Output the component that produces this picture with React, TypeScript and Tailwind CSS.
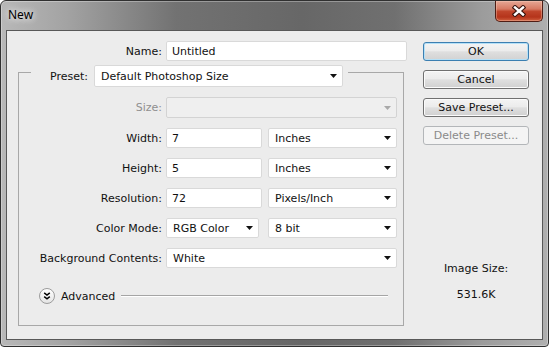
import React from "react";

function Tri({ color = "#111" }: { color?: string }) {
  return (
    <svg width="7" height="4" viewBox="0 0 7 4" className="shrink-0">
      <path d="M0 0H7L3.5 4Z" fill={color} />
    </svg>
  );
}

function Select({ w, text, disabled, h }: { w: string; text?: string; disabled?: boolean; h?: string }) {
  return (
    <div
      className={`flex items-center justify-between ${h ?? "h-[20px]"} ${w} rounded-[2px] border ${
        disabled ? "border-[#d3d3d3] bg-[#efefef]" : "border-[#d9d9d9] bg-white"
      } pl-[6px] pr-[5px]`}
    >
      <span>{text}</span>
      <Tri color={disabled ? "#a9a9a9" : "#111"} />
    </div>
  );
}

function Input({ w, text }: { w: string; text: string }) {
  return (
    <div className={`flex items-center h-[20px] ${w} rounded-[2px] border border-[#d9d9d9] bg-white pl-[5px]`}>
      <span>{text}</span>
    </div>
  );
}

function Row({
  label,
  children,
  disabled,
  extra,
}: {
  label: string;
  children: React.ReactNode;
  disabled?: boolean;
  extra?: string;
}) {
  return (
    <div className={`flex items-center ${extra ?? "h-[20px] mt-[10px]"}`}>
      <div className={`w-[143px] text-right ${disabled ? "text-[#8f8f8f]" : ""}`}>{label}</div>
      <div className="ml-[4px] flex items-center">{children}</div>
    </div>
  );
}

function Btn({
  children,
  primary,
  disabled,
  first,
}: {
  children: React.ReactNode;
  primary?: boolean;
  disabled?: boolean;
  first?: boolean;
}) {
  const cls = disabled
    ? "border-[#b3b6b9] bg-[#f4f4f4] text-[#8a8a8a]"
    : primary
    ? "border-[#3c7fb1] bg-[linear-gradient(#f4f4f4,#ececec_45%,#dfdfdf_52%,#d2d2d2)] shadow-[inset_0_0_0_1px_#b4e0f7]"
    : "border-[#707070] bg-[linear-gradient(#f4f4f4,#ececec_45%,#dfdfdf_52%,#d0d0d0)] shadow-[inset_0_0_0_1px_#fbfbfb]";
  return (
    <div
      className={`h-[19px] ${first ? "mt-[11px]" : "mt-[9px]"} flex items-center justify-center rounded-[3px] border ${cls}`}
    >
      {children}
    </div>
  );
}

function CloseBtn() {
  return (
    <div className="mr-[5px] w-[48px] h-[21px] rounded-b-[5px] border border-t-0 border-[#4f1d14] bg-[linear-gradient(#e6a795_0%,#d77a63_40%,#c0452b_52%,#b5341b_80%,#d0603f_100%)] shadow-[inset_0_0_0_1px_rgba(255,220,200,0.35)] flex items-center justify-center">
      <svg width="14" height="12" viewBox="0 0 14 12">
        <path d="M3 2.5L11 9.5M11 2.5L3 9.5" stroke="#3b1610" strokeWidth="4.6" strokeLinecap="square" />
        <path d="M3 2.5L11 9.5M11 2.5L3 9.5" stroke="#ffffff" strokeWidth="2.4" strokeLinecap="square" />
      </svg>
    </div>
  );
}

function AdvIcon() {
  return (
    <div className="w-[16px] h-[16px] rounded-full border border-[#9c9c9c] bg-[linear-gradient(#ffffff,#e4e4e4)] flex items-center justify-center">
      <svg width="8" height="8" viewBox="0 0 8 8">
        <path d="M1.2 0.8L4 3L6.8 0.8M1.2 4.6L4 6.8L6.8 4.6" stroke="#000" strokeWidth="1.5" fill="none" />
      </svg>
    </div>
  );
}

export default function App() {
  return (
    <div className="w-[549px] h-[347px] font-['DejaVu_Sans',sans-serif] text-[11px] leading-none text-[#111]">
      <div className="w-full h-full flex flex-col rounded-t-[6px] rounded-b-[4px] border border-[#303030] bg-[linear-gradient(90deg,#b8b8b8_0%,#a3a3a3_12%,#727272_32%,#676767_55%,#707070_72%,#9c9c9c_88%,#afafaf_100%)] shadow-[inset_0_0_0_1px_rgba(255,255,255,0.3)] overflow-hidden">
        <div className="h-[29px] shrink-0 flex items-start justify-between">
          <div className="pl-[7px] pt-[8px] font-['Noto_Sans',sans-serif] text-[12px] leading-[12px] text-black [text-shadow:0_0_6px_rgba(255,255,255,0.9),0_0_10px_rgba(255,255,255,0.6)]">
            New
          </div>
          <CloseBtn />
        </div>
        <div className="flex-1 mx-[5px] mb-[6px] border border-[#585858] bg-[#ececec] flex">
          <div className="w-[403px] flex flex-col">
            <div className="flex items-center h-[20px] mt-[10px]">
              <div className="w-[155px] text-right">Name:</div>
              <div className="ml-[4px]">
                <Input w="w-[241px]" text="Untitled" />
              </div>
            </div>
            <fieldset className="ml-[11px] mt-[-3px] w-[386px] min-w-0 border border-[#a8a8a8] p-0 pb-[21px]">
              <legend className="ml-[12px] pt-[7px] pl-[19px] pr-[5px] p-0">
                <div className="flex items-center">
                  <span className="w-[44px]">Preset:</span>
                  <Select w="w-[249px]" h="h-[22px]" text="Default Photoshop Size" />
                </div>
              </legend>
              <Row label="Size:" disabled extra="h-[21px] mt-[10px]">
                <Select w="w-[231px]" disabled h="h-[21px]" />
              </Row>
              <Row label="Width:">
                <Input w="w-[96px]" text="7" />
                <div className="ml-[6px]">
                  <Select w="w-[129px]" text="Inches" />
                </div>
              </Row>
              <Row label="Height:">
                <Input w="w-[96px]" text="5" />
                <div className="ml-[6px]">
                  <Select w="w-[129px]" text="Inches" />
                </div>
              </Row>
              <Row label="Resolution:">
                <Input w="w-[96px]" text="72" />
                <div className="ml-[6px]">
                  <Select w="w-[129px]" text="Pixels/Inch" />
                </div>
              </Row>
              <Row label="Color Mode:">
                <Select w="w-[93px]" text="RGB Color" />
                <div className="ml-[9px]">
                  <Select w="w-[129px]" text="8 bit" />
                </div>
              </Row>
              <Row label="Background Contents:">
                <Select w="w-[231px]" text="White" />
              </Row>
              <div className="flex items-center h-[16px] mt-[20px]">
                <div className="ml-[20px]">
                  <AdvIcon />
                </div>
                <span className="ml-[6px]">Advanced</span>
                <div className="flex-1 ml-[6px] mr-[15px] h-[2px] border-t border-t-[#a5a5a5] border-b border-b-white" />
              </div>
            </fieldset>
          </div>
          <div className="ml-[13px] w-[106px] flex flex-col">
            <Btn primary first>
              OK
            </Btn>
            <Btn>Cancel</Btn>
            <Btn>Save Preset...</Btn>
            <Btn disabled>Delete Preset...</Btn>
            <div className="mt-[117px] leading-[13px] text-center">Image Size:</div>
            <div className="mt-[13px] leading-[13px] text-center">531.6K</div>
          </div>
        </div>
      </div>
    </div>
  );
}
